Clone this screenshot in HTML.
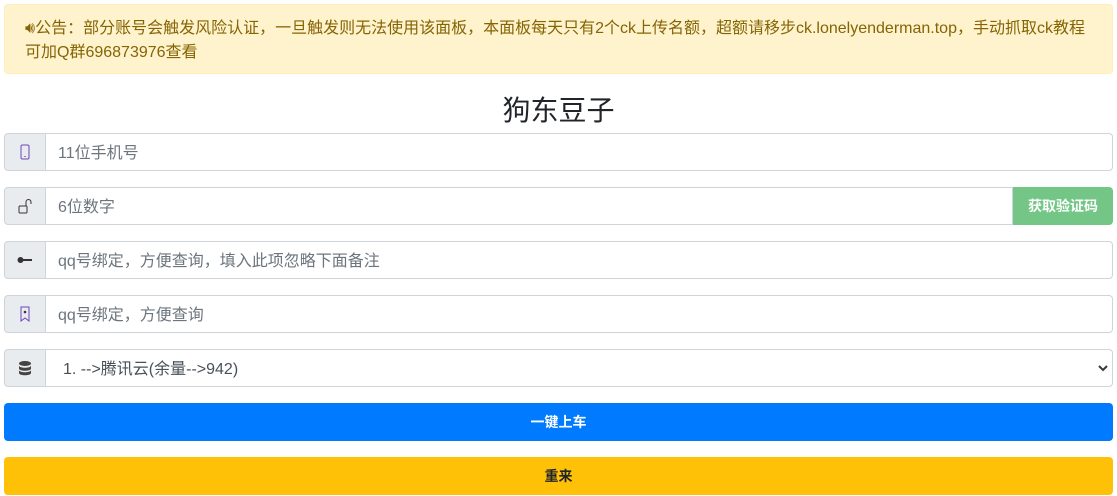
<!DOCTYPE html>
<html><head><meta charset="utf-8"><style>
*{box-sizing:border-box}
body{margin:0;width:1117px;height:496px;overflow:hidden;background:#fff;font-family:"Liberation Sans","Noto Sans CJK SC",sans-serif;color:#212529;font-size:16px}
.alert{position:absolute;left:4px;top:4px;width:1109px;height:70px;background:#fff3cd;border:1px solid #ffeeba;border-radius:4px;color:#856404;padding:12px 20px 0 20px;line-height:24px;font-size:16px}
h1{position:absolute;left:0;width:1117px;top:90px;margin:0;text-align:center;font-weight:400;font-size:28px;line-height:42px}
.row{position:absolute;left:4px;width:1109px;height:38px;display:flex}
.ad{width:42px;height:38px;background:#e9ecef;border:1px solid #ced4da;border-radius:4px 0 0 4px;display:flex;align-items:center;justify-content:center}
.in{flex:1;height:38px;border:1px solid #ced4da;border-left:none;border-radius:0 4px 4px 0;padding-left:12px;padding-top:2px;line-height:36px;color:#6c757d}
.btn{position:absolute;left:4px;width:1109px;height:38px;border-radius:4px;text-align:center;line-height:38px;font-weight:700;font-size:14px}
</style></head><body>
<div class="alert">🔊︎公告：部分账号会触发风险认证，一旦触发则无法使用该面板，本面板每天只有2个ck上传名额，超额请移步ck.lonelyenderman.top，手动抓取ck教程可加Q群696873976查看</div>
<h1>狗东豆子</h1>
<div class="row" style="top:133px"><div class="ad"><svg width="12" height="16" viewBox="0 0 12 16"><rect x="2" y="1" width="8" height="14" rx="1.5" fill="none" stroke="#6f42c1" stroke-width="1"/><rect x="5.5" y="12" width="1" height="1" fill="#333"/></svg></div><div class="in">11位手机号</div></div>
<div class="row" style="top:187px"><div class="ad"><svg width="14" height="16" viewBox="0 0 14 16"><rect x="1" y="8" width="8" height="7" rx="1" fill="none" stroke="#333"/><path d="M8 8V4a2.5 2.5 0 0 1 5 0v2" fill="none" stroke="#333"/></svg></div><div class="in" style="border-radius:0">6位数字</div><div style="width:100px;height:38px;background:#74c687;color:#fff;font-weight:700;font-size:14px;text-align:center;line-height:38px;border-radius:0 4px 4px 0">获取验证码</div></div>
<div class="row" style="top:241px"><div class="ad"><svg width="16" height="8" viewBox="0 0 16 8"><circle cx="3.5" cy="4" r="3" fill="#333"/><rect x="5" y="3" width="10" height="2" fill="#333"/></svg></div><div class="in">qq号绑定，方便查询，填入此项忽略下面备注</div></div>
<div class="row" style="top:295px"><div class="ad"><svg width="12" height="16" viewBox="0 0 12 16"><path d="M2 1h8v14l-4-3-4 3z" fill="none" stroke="#6f42c1"/><circle cx="6" cy="6" r="1.3" fill="#333"/></svg></div><div class="in">qq号绑定，方便查询</div></div>
<div class="row" style="top:349px"><div class="ad"><svg width="14" height="16" viewBox="0 0 14 16"><ellipse cx="7" cy="3.5" rx="6" ry="2.5" fill="#444"/><path d="M1 5.5c0 3 12 3 12 0v3c0 3-12 3-12 0z" fill="#444"/><path d="M1 10c0 3 12 3 12 0v3c0 3-12 3-12 0z" fill="#444"/></svg></div><div class="in" style="color:#495057;padding-left:17px;position:relative">1. -->腾讯云(余量-->942)<svg style="position:absolute;right:4px;top:14px" width="10" height="8" viewBox="0 0 10 8"><path d="M1 2l4 4 4-4" fill="none" stroke="#343a40" stroke-width="2"/></svg></div></div>
<div class="btn" style="top:403px;background:#007bff;color:#fff">一键上车</div>
<div class="btn" style="top:457px;background:#ffc107;color:#212529">重来</div>
</body></html>
